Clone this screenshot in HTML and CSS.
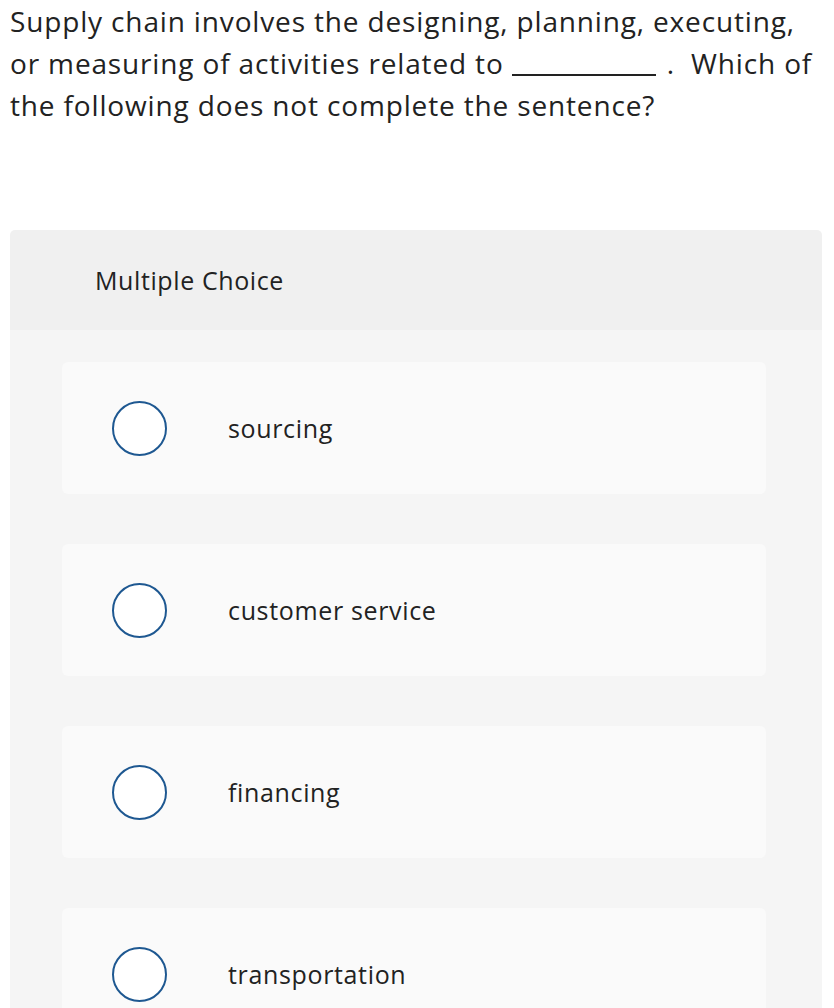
FILE: index.html
```html
<!DOCTYPE html>
<html>
<head>
<meta charset="utf-8">
<link rel="stylesheet" href="styles.css">
</head>
<body>
<div class="page">
  <p class="question">Supply chain involves the designing, planning, executing, or measuring of activities related to <span class="blank"></span><span class="dot">.</span> Which of the following does not complete the sentence?</p>
  <section class="panel">
    <div class="panel-head">Multiple Choice</div>
    <div class="panel-body">
      <div class="option"><span class="radio"></span><span class="label">sourcing</span></div>
      <div class="option"><span class="radio"></span><span class="label">customer service</span></div>
      <div class="option"><span class="radio"></span><span class="label">financing</span></div>
      <div class="option"><span class="radio"></span><span class="label">transportation</span></div>
    </div>
  </section>
</div>
</body>
</html>
```
FILE: styles.css
```css
html, body {
  margin: 0;
  padding: 0;
  background: #ffffff;
}
html {
  height: 1008px;
  overflow: hidden;
}
body {
  font-family: "Open Sans", "Liberation Sans", sans-serif;
  color: #222222;
}
.page {
  padding: 0 12px 0 10px;
}
.question {
  margin: 0;
  font-size: 28px;
  letter-spacing: 0.85px;
  line-height: 42px;
  width: 812px;
}
.blank {
  display: inline-block;
  width: 144px;
  height: 2px;
  background: #222222;
  vertical-align: -2px;
}
.dot {
  margin-left: 11px;
  margin-right: 8px;
}
.panel {
  margin-top: 104px;
  width: 812px;
  border-radius: 5px 5px 0 0;
  overflow: hidden;
}
.panel-head {
  background: #f0f0f0;
  height: 100px;
  display: flex;
  align-items: center;
  padding-left: 85px;
  font-size: 25px;
  letter-spacing: 0.6px;
}
.panel-body {
  background: #f5f5f5;
  padding: 32px 56px 40px 52px;
  display: flex;
  flex-direction: column;
  gap: 50px;
}
.option {
  background: #fafafa;
  border-radius: 6px;
  height: 132px;
  display: flex;
  align-items: center;
  padding-left: 50px;
}
.radio {
  width: 51px;
  height: 51px;
  border: 2px solid #1e5891;
  border-radius: 50%;
  background: #ffffff;
  flex: none;
}
.label {
  margin-left: 61px;
  font-size: 25px;
  letter-spacing: 0.65px;
}
```
